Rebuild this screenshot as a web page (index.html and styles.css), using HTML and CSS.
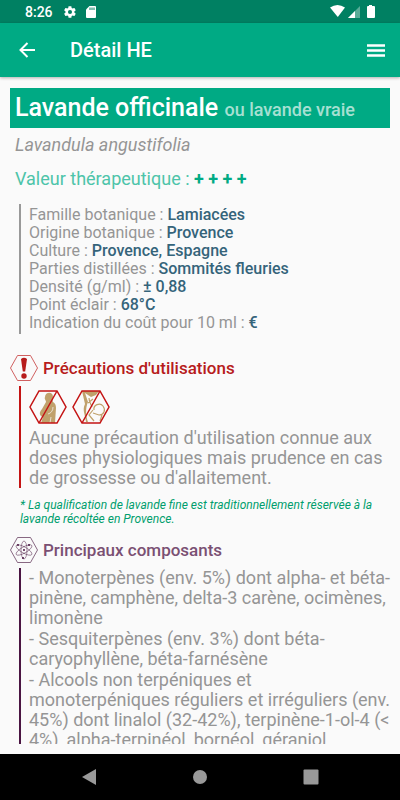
FILE: index.html
```html
<!DOCTYPE html>
<html lang="fr">
    <head>
        <meta charset="UTF-8" />
        <meta name="viewport" content="width=device-width, initial-scale=1.0" />
        <title>Détail HE</title>
        <link rel="stylesheet" href="styles.css" />
    </head>
    <body>
        <!-- status bar -->
        <div class="status">
            <span class="time">8:26</span>
            <svg class="gear" viewBox="0 0 24 24" width="14" height="14">
                <path fill="#fff" fill-rule="evenodd" d="M19.4 13a7.800 7.800 0 0 0 0-2l2.100-1.600c.2-.2.200-.5.100-.7l-2-3.400c-.1-.2-.4-.3-.6-.2l-2.500 1a7.300 7.300 0 0 0-1.700-1l-.4-2.600c0-.3-.2-.5-.5-.5h-4c-.3 0-.5.2-.5.5L9 5.100c-.6.200-1.200.6-1.700 1l-2.500-1c-.2-.1-.5 0-.6.200l-2 3.400c-.1.200-.1.500.1.700L4.400 11a7.800 7.800 0 0 0 0 2l-2.100 1.600c-.2.200-.2.500-.1.700l2 3.400c.1.200.4.300.6.200l2.500-1c.5.400 1.100.8 1.700 1l.4 2.600c0 .3.200.5.500.5h4c.3 0 .5-.2.500-.5l.4-2.600c.6-.2 1.200-.6 1.700-1l2.500 1c.2.100.5 0 .6-.2l2-3.400c.1-.2.100-.5-.1-.7zM12 15.500a3.500 3.500 0 1 1 0-7 3.500 3.500 0 0 1 0 7z" />
            </svg>
            <svg class="sd" viewBox="0 0 10 12" width="10" height="12">
                <path fill="#fff" d="M3.500 0H9a1 1 0 0 1 1 1v10a1 1 0 0 1-1 1H1a1 1 0 0 1-1-1V3.500z" />
                <path stroke="#008062" d="M4 1.500v2.500M6 1.500v2.500M8 1.500v2.500" />
            </svg>
            <svg class="signals" viewBox="0 0 45 13" width="45" height="13">
                <path fill="#fff" d="M0 2.500Q7.500-2.500 15 2.500L7.800 12z" />
                <path fill="#fff" opacity=".35" d="M18 13L30 1v12z" />
                <path fill="#fff" d="M18 13l7-7v7z" />
                <path fill="#fff" d="M39 0h3v1h2a1 1 0 0 1 1 1v10a1 1 0 0 1-1 1h-6a1 1 0 0 1-1-1V2a1 1 0 0 1 1-1h1z" />
            </svg>
        </div>

        <header class="toolbar">
            <button type="button" class="icon-btn" aria-label="Retour">
                <svg viewBox="0 0 16 16" width="16" height="16">
                    <path fill="none" stroke="#fff" stroke-width="2" d="M16 8H2M8.500 1L1.500 8l7 7" />
                </svg>
            </button>
            <h1>Détail HE</h1>
            <button type="button" class="icon-btn" aria-label="Menu">
                <svg viewBox="0 0 18 13" width="18" height="13">
                    <path stroke="#fff" stroke-width="2.500" d="M0 1.500h18M0 6.500h18M0 11.500h18" />
                </svg>
            </button>
        </header>

        <main class="content">
            <h2 class="banner">Lavande officinale <small>ou lavande vraie</small></h2>
            <p class="latin">Lavandula angustifolia</p>
            <p class="value">Valeur thérapeutique : <b>+ + + +</b></p>

            <ul class="block infos">
                <li>Famille botanique : <b>Lamiacées</b></li>
                <li>Origine botanique : <b>Provence</b></li>
                <li>Culture : <b>Provence, Espagne</b></li>
                <li>Parties distillées : <b>Sommités fleuries</b></li>
                <li>Densité (g/ml) : <b>± 0,88</b></li>
                <li>Point éclair : <b>68°C</b></li>
                <li>Indication du coût pour 10 ml : <b>€</b></li>
            </ul>

            <section class="precautions">
                <h3>
                    <svg viewBox="0 0 28 26" width="28" height="26">
                        <path fill="none" stroke="#d06060" d="M7.500 .5h13l7 12.500-7 12.500h-13L.5 13z" />
                        <path fill="#b71c1c" d="M11 4q3-2.500 6 0l-1.800 12.500h-2.400z" />
                        <circle cx="14" cy="21" r="2.700" fill="#b71c1c" />
                    </svg>
                    Précautions d'utilisations
                </h3>
                <div class="block">
                    <div class="pictos">
                        <!-- grossesse -->
                        <svg viewBox="0 0 38 34" width="38" height="34">
                            <path fill="#c0a16b" d="M16 7c0-5 8-6 8 0 0 2-1 3 0 5 2 1 3 3 3 6l-1 15H12l2-6c-4-1-4-5-1-8l4-7c0-2-2-3-1-5z" />
                            <path fill="none" stroke="#fafafa" stroke-width=".7" d="M24 17c0 4-2 6-5 7M22 27l-1 6" />
                            <path fill="none" stroke="#c41414" stroke-width="1.500" d="M10 1h18l9 16-9 16H10L1 17zM10 33L28 1" />
                        </svg>
                        <!-- allaitement -->
                        <svg viewBox="0 0 38 34" width="38" height="34">
                            <path fill="#c0a16b" d="M10 1h17l-3 4-5 2-6-4 3 9c-3 7-2 14 0 20h-2c-1-8-4-12-1-18z" />
                            <path fill="none" stroke="#c0a16b" stroke-width="1.200" d="M17 8c0 4 2 6 3 9M16 13l5-4M22 20c-1-5 6-8 9-4 3 4 1 9-4 9l-6-2M21 20l-4 5 5 6M30 25l-2 6" />
                            <path fill="none" stroke="#c41414" stroke-width="1.500" d="M10 1h18l9 16-9 16H10L1 17zM10 33L28 1" />
                        </svg>
                    </div>
                    <p>Aucune précaution d'utilisation connue aux doses physiologiques mais prudence en cas de grossesse ou d'allaitement.</p>
                </div>
            </section>

            <p class="note">* La qualification de lavande fine est traditionnellement réservée à la lavande récoltée en Provence.</p>

            <section class="composants">
                <h3>
                    <svg viewBox="0 0 28 26" width="28" height="26">
                        <g fill="none" stroke="#6b4263">
                            <path stroke-width=".8" d="M7.500 .5h13l7 12.500-7 12.500h-13L.5 13z" />
                            <g stroke-width=".6">
                                <ellipse cx="14" cy="13" rx="3" ry="9" />
                                <ellipse cx="14" cy="13" rx="3" ry="9" transform="rotate(60 14 13)" />
                                <ellipse cx="14" cy="13" rx="3" ry="9" transform="rotate(120 14 13)" />
                            </g>
                        </g>
                        <g fill="#4a1542">
                            <circle cx="14" cy="13" r="1" />
                            <circle cx="8" cy="8" r="1" />
                            <circle cx="19" cy="8" r="1" />
                            <circle cx="13" cy="21" r="1" />
                        </g>
                    </svg>
                    Principaux composants
                </h3>
                <ul class="block">
                    <li>- Monoterpènes (env. 5%) dont alpha- et béta-pinène, camphène, delta-3 carène, ocimènes, limonène</li>
                    <li>- Sesquiterpènes (env. 3%) dont béta-caryophyllène, béta-farnésène</li>
                    <li>- Alcools non terpéniques et monoterpéniques réguliers et irréguliers (env. 45%) dont linalol (32-42%), terpinène-1-ol-4 (&lt; 4%), alpha-terpinéol, bornéol, géraniol</li>
                </ul>
            </section>
        </main>

        <!-- android buttons -->
        <nav class="navbar">
            <button type="button" aria-label="Précédent">
                <svg viewBox="0 0 16 16" width="16" height="16"><path fill="#999" d="M15 0v16L1 8z" /></svg>
            </button>
            <button type="button" aria-label="Accueil">
                <svg viewBox="0 0 16 16" width="16" height="16"><circle cx="8" cy="8" r="7" fill="#999" /></svg>
            </button>
            <button type="button" aria-label="Applications">
                <svg viewBox="0 0 16 16" width="16" height="16"><rect x=".5" y=".5" width="15" height="15" rx="1" fill="#999" /></svg>
            </button>
        </nav>
    </body>
</html>
```

FILE: styles.css
```css
* {
    margin: 0;
    padding: 0;
    box-sizing: border-box;
}
body {
    display: flex;
    flex-direction: column;
    height: 100vh;
    background: #fafafa;
    color: #959595;
    font-family: Roboto, "Liberation Sans", sans-serif;
    font-size: 18px;
    line-height: 20px;
}
ul {
    list-style: none;
}
svg {
    display: block;
    flex-shrink: 0;
}
b {
    font-weight: 500;
}
button {
    display: flex;
    align-items: center;
    justify-content: center;
    border: none;
    background: none;
    cursor: pointer;
}

/* status bar */
.status {
    display: flex;
    align-items: center;
    flex-shrink: 0;
    height: 23px;
    padding: 0 25px;
    background: #008062;
    color: #fff;
}
.time {
    font-size: 14px;
    font-weight: 500;
}
.gear {
    margin-left: 10px;
}
.sd {
    margin-left: 9px;
}
.signals {
    margin-left: auto;
}

.toolbar {
    display: flex;
    align-items: center;
    flex-shrink: 0;
    height: 54px;
    padding: 0 1px 0 4px;
    background: #00aa84;
    box-shadow: 0 1px 3px rgba(0, 0, 0, 0.3);
    color: #fff;
}
.toolbar h1 {
    flex: 1;
    margin-left: 20px;
    font-size: 20px;
    font-weight: 500;
}
.icon-btn {
    width: 46px;
    height: 46px;
}

.content {
    flex: 1;
    min-height: 0;
    margin: 11px 0 10px;
    padding: 0 10px;
    overflow-y: auto;
    scrollbar-width: none;
}
.banner {
    padding: 0 5px;
    background: #00aa84;
    color: #fff;
    font-size: 25px;
    font-weight: 500;
    line-height: 40px;
}
.banner small {
    color: #a6e0d2;
    font-size: 18px;
    line-height: 20px;
}
.latin,
.value {
    padding: 0 5px;
}
.latin {
    margin-top: 7px;
    font-style: italic;
}
.value {
    margin-top: 14px;
    color: #4dc4a9;
}
.value b {
    color: #00aa84;
    font-weight: 700;
}

.block {
    margin-left: 9px;
    margin-right: -4px;
    padding-left: 8px;
    border-left: 2px solid #999;
}
.infos {
    margin-top: 15px;
    padding-top: 2px;
    padding-bottom: 2px;
    font-size: 16px;
    line-height: 18px;
}
.infos b {
    color: #35647a;
}

h3 {
    display: flex;
    align-items: center;
    gap: 5px;
    font-size: 17px;
    font-weight: 500;
}
.precautions {
    margin-top: 21px;
}
.precautions h3 {
    color: #b71c1c;
}
.precautions .block {
    margin-top: 5px;
    border-color: #c41414;
}
.pictos {
    display: flex;
    gap: 5px;
    padding: 4px 0;
}
.note {
    margin: 10px 10px 11px;
    color: #009e6d;
    font-size: 12px;
    font-style: italic;
    line-height: 14px;
}
.composants h3 {
    color: #7a5073;
}
.composants .block {
    margin-top: 5px;
    border-color: #4a1542;
}
.composants li + li {
    margin-top: 1px;
}

.navbar {
    display: flex;
    align-items: center;
    justify-content: center;
    gap: 63px;
    flex-shrink: 0;
    height: 46px;
    background: #000;
}
.navbar button {
    width: 48px;
    height: 46px;
}
```
